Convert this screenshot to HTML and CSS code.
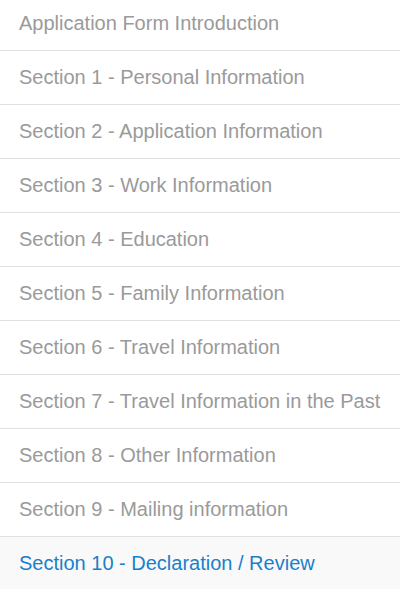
FILE: index.html
```html
<!DOCTYPE html>
<html>
<head>
<meta charset="utf-8">
<link rel="stylesheet" href="styles.css">
</head>
<body>
<ul class="nav">
  <li class="nav-item">Application Form Introduction</li>
  <li class="nav-item">Section 1 - Personal Information</li>
  <li class="nav-item">Section 2 - Application Information</li>
  <li class="nav-item">Section 3 - Work Information</li>
  <li class="nav-item">Section 4 - Education</li>
  <li class="nav-item">Section 5 - Family Information</li>
  <li class="nav-item">Section 6 - Travel Information</li>
  <li class="nav-item">Section 7 - Travel Information in the Past</li>
  <li class="nav-item">Section 8 - Other Information</li>
  <li class="nav-item">Section 9 - Mailing information</li>
  <li class="nav-item active">Section 10 - Declaration / Review</li>
</ul>
</body>
</html>
```

FILE: styles.css
```css
html, body {
  margin: 0;
  padding: 0;
  background: #fff;
  overflow: hidden;
}
.nav {
  list-style: none;
  margin: -3px 0 0 0;
  padding: 0;
  font-family: "Liberation Sans", Arial, sans-serif;
  font-size: 20px;
}
.nav-item {
  height: 53px;
  line-height: 53px;
  padding-left: 19px;
  color: #9a9a9a;
  border-bottom: 1px solid #e0e0e0;
  white-space: nowrap;
}
.nav-item.active {
  color: #1a7fcb;
  background: #f9f9f9;
}
```
